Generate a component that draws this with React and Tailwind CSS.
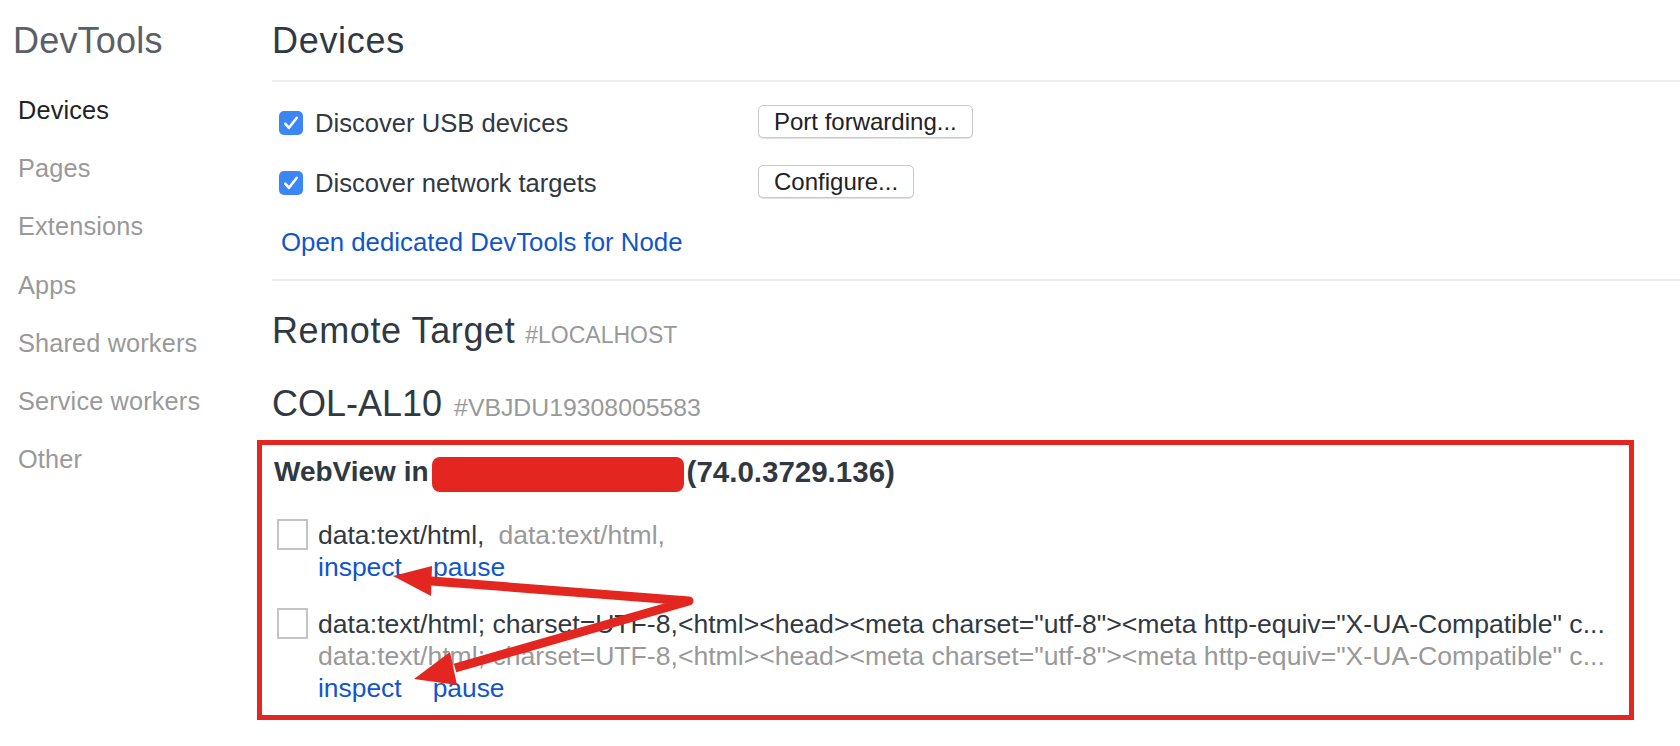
import React from "react";

const LONG =
  'data:text/html; charset=UTF-8,<html><head><meta charset="utf-8"><meta http-equiv="X-UA-Compatible" c...';

function BlueCheck() {
  return (
    <div className="w-[24px] h-[24px] rounded-[5px] bg-[#3b86f7] flex items-center justify-center shrink-0">
      <svg width="24" height="24" viewBox="0 0 24 24">
        <path
          d="M6.2 12.6 L10 16.8 L17.8 6.8"
          stroke="white"
          strokeWidth="2.6"
          fill="none"
          strokeLinecap="round"
          strokeLinejoin="round"
        />
      </svg>
    </div>
  );
}

function Button({ children }) {
  return (
    <div className="h-[33px] mb-[3px] px-[15px] border border-[#c9c9c9] rounded-[5px] bg-white shadow-[0_1px_1px_rgba(0,0,0,0.12)] text-[24px] leading-[31px] text-[#222] whitespace-nowrap">
      {children}
    </div>
  );
}

function GrayBox() {
  return <div className="ml-[3px] w-[31px] h-[31px] border-2 border-[#c4c4c4] bg-white shrink-0" />;
}

function Actions() {
  return (
    <div className="flex text-[#1155cc]">
      <span>inspect</span>
      <span className="ml-[31px]">pause</span>
    </div>
  );
}

const sideItems = [
  "Devices",
  "Pages",
  "Extensions",
  "Apps",
  "Shared workers",
  "Service workers",
  "Other",
];

export default function App() {
  return (
    <div className="relative w-[1680px] h-[746px] overflow-hidden bg-white flex font-['Liberation_Sans',Arial,sans-serif]">
      {/* Sidebar */}
      <div className="w-[272px] shrink-0 pt-[19px]">
        <div className="pl-[13px] text-[36px] leading-[44px] tracking-[0.2px] text-[#5a5f66]">DevTools</div>
        <div className="mt-[18px]">
          {sideItems.map((s, i) => (
            <div
              key={s}
              className={
                "pl-[18px] text-[25.3px] leading-[58.2px] tracking-[0.15px] " +
                (i === 0 ? "text-[#222]" : "text-[#999]")
              }
            >
              {s}
            </div>
          ))}
        </div>
      </div>

      {/* Main */}
      <div className="flex-1 pt-[19px] text-[#303942]">
        <div className="text-[36px] leading-[44px] tracking-[0.7px]">Devices</div>
        <div className="mt-[17px] h-[2px] bg-[#eeeeee]" />

        <div className="mt-[25px] flex items-center h-[32px]">
          <div className="w-[486px] flex items-center">
            <div className="ml-[7px]">
              <BlueCheck />
            </div>
            <span className="ml-[12px] text-[25.6px] leading-[32px]">Discover USB devices</span>
          </div>
          <Button>Port forwarding...</Button>
        </div>

        <div className="mt-[28px] flex items-center h-[32px]">
          <div className="w-[486px] flex items-center">
            <div className="ml-[7px]">
              <BlueCheck />
            </div>
            <span className="ml-[12px] text-[25.6px] leading-[32px]">Discover network targets</span>
          </div>
          <Button>Configure...</Button>
        </div>

        <div className="mt-[27px] ml-[9px] text-[25.8px] leading-[32px] text-[#1155cc]">
          Open dedicated DevTools for Node
        </div>

        <div className="mt-[21px] h-[2px] bg-[#eeeeee]" />

        <div className="mt-[28px] text-[36px] leading-[44px] whitespace-nowrap">
          <span className="tracking-[0.6px]">Remote Target</span>
          <span className="ml-[10px] text-[23px] leading-none text-[#999]">#LOCALHOST</span>
        </div>

        <div className="mt-[29px] text-[36px] leading-[44px] whitespace-nowrap">
          COL-AL10
          <span className="ml-[12px] text-[24.8px] leading-none text-[#999]">#VBJDU19308005583</span>
        </div>

        {/* Highlighted target */}
        <div className="mt-[14px] -ml-[15px] w-[1377px] border-[5px] border-[#e3261f] pl-[12px] pt-[9px] pb-[11px]">
          <div className="flex items-start font-bold leading-[36px] whitespace-nowrap">
            <span className="text-[28px]">WebView in</span>
            <span className="mt-[3px] mx-[3px] w-[252px] h-[35px] rounded-[8px] bg-[#e3261f] shrink-0" />
            <span className="text-[29.5px]">(74.0.3729.136)</span>
          </div>

          <div className="mt-[27px] flex">
            <GrayBox />
            <div className="ml-[10px] text-[26.5px] leading-[32px] min-w-0">
              <div className="flex whitespace-nowrap">
                <span>data:text/html,</span>
                <span className="ml-[14px] text-[#999]">data:text/html,</span>
              </div>
              <Actions />
            </div>
          </div>

          <div className="mt-[25px] flex">
            <GrayBox />
            <div className="ml-[10px] text-[26.6px] leading-[32px] min-w-0">
              <div className="whitespace-nowrap">{LONG}</div>
              <div className="whitespace-nowrap text-[#999]">{LONG}</div>
              <div className="text-[26.4px]">
                <Actions />
              </div>
            </div>
          </div>
        </div>
      </div>

      {/* Annotation arrows */}
      <svg
        className="absolute left-0 top-0 pointer-events-none"
        width="1680"
        height="746"
        viewBox="0 0 1680 746"
      >
        <polyline
          points="428,580.7 689,601 455,668"
          fill="none"
          stroke="#e3261f"
          strokeWidth="9"
          strokeLinejoin="round"
        />
        <polygon points="393,576 432,566 431,596" fill="#e3261f" />
        <polygon points="414,679 450,652 457,685" fill="#e3261f" />
      </svg>
    </div>
  );
}
